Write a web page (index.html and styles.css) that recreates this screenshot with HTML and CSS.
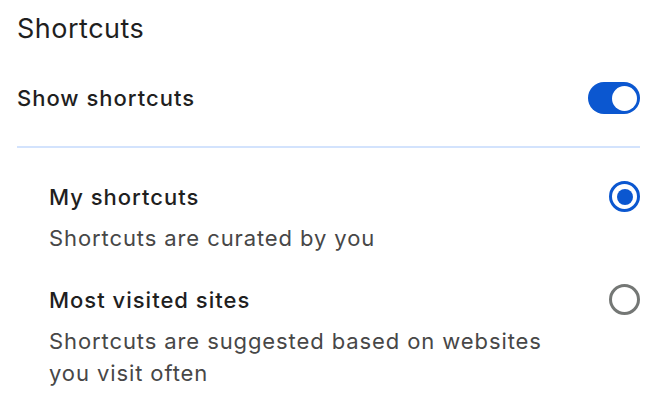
FILE: index.html
```html
<!DOCTYPE html>
<html lang="en">
<head>
<meta charset="utf-8">
<link rel="stylesheet" href="styles.css">
</head>
<body>
<main class="panel">
  <h1 class="title">Shortcuts</h1>
  <div class="toggle-row">
    <span class="toggle-label">Show shortcuts</span>
    <span class="switch" role="switch" aria-checked="true"><span class="knob"></span></span>
  </div>
  <hr class="divider">
  <div class="options">
    <div class="option">
      <div class="option-text">
        <div class="option-title">My shortcuts</div>
        <div class="option-desc">Shortcuts are curated by you</div>
      </div>
      <span class="radio checked"><span class="dot"></span></span>
    </div>
    <div class="option">
      <div class="option-text">
        <div class="option-title">Most visited sites</div>
        <div class="option-desc">Shortcuts are suggested based on websites<br>you visit often</div>
      </div>
      <span class="radio"></span>
    </div>
  </div>
</main>
</body>
</html>
```
FILE: styles.css
```css
html, body {
  margin: 0;
  padding: 0;
  background: #ffffff;
}
body {
  font-family: Inter, "Noto Sans", "Liberation Sans", sans-serif;
  color: #1f1f1f;
}
.panel {
  padding: 13px 16px 0 17px;
}
.title {
  margin: 0;
  font-size: 27px;
  line-height: 32px;
  font-weight: 400;
  letter-spacing: 0.5px;
  color: #1f1f1f;
}
.toggle-row {
  display: flex;
  align-items: center;
  justify-content: space-between;
  height: 48px;
  margin-top: 29px;
}
.toggle-label {
  font-size: 22px;
  font-weight: 500;
  line-height: 32px;
  letter-spacing: 1px;
}
.switch {
  display: flex;
  align-items: center;
  justify-content: flex-end;
  box-sizing: border-box;
  width: 52px;
  height: 32px;
  padding: 0 3px;
  border-radius: 16px;
  background: #0b57d0;
}
.knob {
  width: 25px;
  height: 25px;
  border-radius: 50%;
  background: #ffffff;
}
.divider {
  margin: 24px 0 0;
  border: 0;
  border-top: 2px solid #d3e3fd;
}
.options {
  display: flex;
  flex-direction: column;
  gap: 30px;
  padding: 33px 0 0 32px;
}
.option {
  display: flex;
  justify-content: space-between;
  align-items: flex-start;
}
.option-title {
  font-size: 22px;
  font-weight: 500;
  line-height: 32px;
  letter-spacing: 1px;
  color: #1f1f1f;
}
.option-desc {
  margin-top: 9px;
  font-size: 22px;
  line-height: 32px;
  letter-spacing: 0.9px;
  color: #474747;
}
.radio {
  box-sizing: border-box;
  width: 31px;
  height: 31px;
  border-radius: 50%;
  border: 3.5px solid #747775;
  display: flex;
  align-items: center;
  justify-content: center;
}
.radio.checked {
  border-color: #0b57d0;
}
.dot {
  width: 16px;
  height: 16px;
  border-radius: 50%;
  background: #0b57d0;
}
```
